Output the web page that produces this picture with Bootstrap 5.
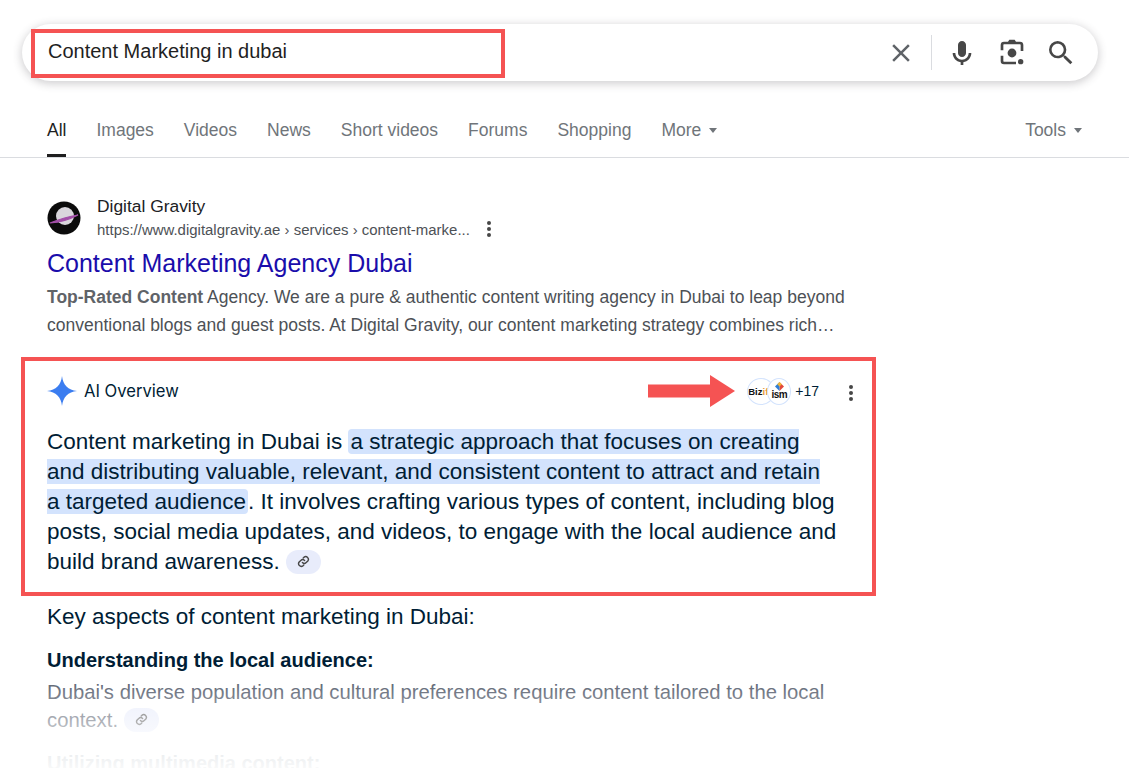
<!DOCTYPE html>
<html lang="en">
  <head>
    <meta charset="UTF-8" />
    <meta name="viewport" content="width=device-width, initial-scale=1.0" />
    <title>Content Marketing in dubai - Search</title>

    <link href="https://cdn.jsdelivr.net/npm/bootstrap@5.3.0/dist/css/bootstrap.min.css" rel="stylesheet" />
    <style>
      html, body {
        height: 768px;
        overflow: hidden;
      }
      body {
        position: relative;
        background-color: #fff;
        font-family: "Liberation Sans", Arial, sans-serif;
        color: #001d35;
      }
      .search-wrap {
        padding: 24px 31px 0 22px;
      }
      .search-pill {
        position: relative;
        height: 57px;
        border-radius: 29px;
        box-shadow: 0 2px 8px 1px rgba(64, 60, 67, 0.24);
        padding: 0 21px 0 26px;
      }
      .search-query {
        font-size: 20px;
        color: #1f1f1f;
        margin-top: -3px;
      }
      .search-actions svg {
        display: block;
      }
      .action-sep {
        width: 1px;
        height: 35px;
        background: #dadce0;
        margin: 0 14px 0 15px;
      }
      .icon-gap {
        margin-left: 17px;
      }
      .icon-gap-lens {
        margin-left: 18px;
      }
      .note-box {
        position: absolute;
        left: -17px;
        top: -7px;
        width: 474px;
        height: 49px;
        border: 4px solid #f55353;
        pointer-events: none;
      }
      .tabs-row {
        height: 77px;
        border-bottom: 1px solid #dadce0;
        padding: 0 47px;
      }
      .tab-list {
        gap: 30px;
      }
      .tab-item {
        font-size: 17.5px;
        color: #70757a;
        padding-top: 38px;
        height: 76px;
        line-height: 22px;
      }
      .tab-item.on {
        color: #1f1f1f;
        border-bottom: 3px solid #1f1f1f;
      }
      .tab-caret {
        display: inline-block;
        width: 0;
        height: 0;
        margin-left: 8px;
        vertical-align: 3px;
        border-left: 4.5px solid transparent;
        border-right: 4.5px solid transparent;
        border-top: 5px solid #70757a;
      }
      .result-block {
        padding: 36px 0 0 47px;
        width: 860px;
      }
      .logo-gap {
        margin-right: 16px;
      }
      .site-name {
        font-size: 17.4px;
        line-height: 24px;
        color: #202124;
      }
      .site-url {
        font-size: 14.96px;
        line-height: 24px;
        color: #4d5156;
      }
      .url-dots {
        margin-left: 17px;
      }
      .dots-v {
        width: 4px;
      }
      .dots-v i {
        display: block;
        width: 4px;
        height: 4px;
        border-radius: 50%;
        background: #474747;
        margin-bottom: 2px;
      }
      .result-title {
        font-size: 25px;
        line-height: 32px;
        color: #1a0dab;
        text-decoration: none;
        display: block;
        margin-top: 5px;
      }
      .result-snippet {
        font-size: 17.5px;
        line-height: 28px;
        color: #4d5156;
        margin: 4px 0 0;
        white-space: nowrap;
      }
      .result-snippet b {
        color: #5f6368;
      }
      .ai-box {
        position: relative;
        margin: 18px 0 0 21px;
        width: 855px;
        height: 239px;
        border: 4px solid #f55353;
        padding: 0 0 0 22px;
      }
      .ai-label {
        font-family: Inter, "Liberation Sans", sans-serif;
        font-size: 16.6px;
        color: #001d35;
        margin-left: -1px;
      }
      .ai-head {
        height: 60px;
        padding-right: 19px;
      }
      .ai-menu {
        margin-top: 5px;
      }
      .ai-arrow {
        position: absolute;
        left: 623px;
        top: 14px;
      }
      .src-dot {
        position: relative;
        width: 28px;
        height: 27px;
        border-radius: 50%;
        border: 1px solid #d3e3fd;
        background: #fff;
        font-size: 9.500px;
        font-weight: 700;
        line-height: 25px;
        color: #111;
        overflow: hidden;
        white-space: nowrap;
      }
      .src-dot + .src-dot {
        margin-left: -8px;
        width: 24px;
        height: 27px;
        text-align: center;
        line-height: 32px;
        font-size: 10px;
        letter-spacing: -0.5px;
      }
      .src-mark {
        position: absolute;
        left: 7px;
        top: 3px;
      }
      .src-more {
        font-size: 14px;
        color: #001d35;
        margin-left: 4px;
        margin-right: 30px;
      }
      .ai-text {
        font-size: 22.5px;
        line-height: 30px;
        margin: 6px 0 0;
        width: 790px;
        color: #001d35;
      }
      .ai-hl {
        background: #d3e3fd;
        border-radius: 4px;
        padding: 0 2px;
      }
      .link-chip {
        display: inline-flex;
        align-items: center;
        justify-content: center;
        width: 35px;
        height: 24px;
        border-radius: 12px;
        background: #e8ecfb;
        vertical-align: 1px;
      }
      .more-block {
        padding: 0 0 0 47px;
        width: 860px;
      }
      .key-line {
        font-size: 22.5px;
        line-height: 28px;
        margin: 7px 0 0;
      }
      .aspect-title {
        font-weight: 700;
        font-size: 20px;
        line-height: 24px;
        margin: 17px 0 0;
      }
      .aspect-text {
        font-size: 20.3px;
        line-height: 28px;
        margin: 6px 0 6px;
        color: #474f5f;
      }
      .page-fade {
        position: absolute;
        left: 0;
        right: 0;
        top: 670px;
        height: 98px;
        background: linear-gradient(to bottom, rgba(255,255,255,0) 0, rgba(255,255,255,0.55) 50px, rgba(255,255,255,0.93) 85px, rgba(255,255,255,0.97) 98px);
        pointer-events: none;
      }
    </style>
  </head>
  <body>
    <div class="search-wrap">
      <div class="search-pill d-flex align-items-center justify-content-between">
        <div class="search-query position-relative">
          Content Marketing in dubai
          <div class="note-box"></div>
        </div>
        <div class="search-actions d-flex align-items-center">
          <svg width="30" height="30" viewBox="0 0 24 24" fill="#5f6368"><path d="M19 6.41L17.59 5 12 10.59 6.41 5 5 6.41 10.59 12 5 17.59 6.41 19 12 13.41 17.59 19 19 17.59 13.41 12z"/></svg>
          <div class="action-sep"></div>
          <svg width="32" height="32" viewBox="0 0 24 24" fill="#474747"><path d="M12 15c1.66 0 3-1.34 3-3V6c0-1.66-1.34-3-3-3S9 4.34 9 6v6c0 1.66 1.34 3 3 3z"/><path d="M17 12c0 2.76-2.24 5-5 5s-5-2.24-5-5H5c0 3.53 2.61 6.43 6 6.92V21h2v-2.08c3.39-.49 6-3.39 6-6.92h-2z"/></svg>
          <svg class="icon-gap-lens" width="32" height="32" viewBox="0 0 24 24" fill="#474747"><path d="M9 3.500 10 2h4l1 1.500h3A2.500 2.500 0 0 1 20.500 6v4.500h-2V6a.5.5 0 0 0-.5-.5H6a.5.5 0 0 0-.5.5v4h-2V6A2.500 2.500 0 0 1 6 3.500z"/><path d="M3.500 14h2v4a.5.5 0 0 0 .5.5h9v2H6A2.500 2.500 0 0 1 3.500 18z"/><circle cx="12" cy="12" r="3.300"/><circle cx="18.500" cy="18.500" r="2"/></svg>
          <svg class="icon-gap" width="32" height="32" viewBox="0 0 24 24" fill="#474747"><path d="M15.5 14h-.79l-.28-.27A6.471 6.471 0 0 0 16 9.5 6.5 6.5 0 1 0 9.5 16c1.61 0 3.09-.59 4.23-1.57l.27.28v.79l5 4.99L20.49 19l-4.99-5zm-6 0C7.01 14 5 11.99 5 9.5S7.01 5 9.500 5 14 7.010 14 9.500 11.990 14 9.500 14z"/></svg>
        </div>
      </div>
    </div>

    <div class="tabs-row d-flex justify-content-between">
      <div class="tab-list d-flex">
        <div class="tab-item on">All</div>
        <div class="tab-item">Images</div>
        <div class="tab-item">Videos</div>
        <div class="tab-item">News</div>
        <div class="tab-item">Short videos</div>
        <div class="tab-item">Forums</div>
        <div class="tab-item">Shopping</div>
        <div class="tab-item">More<span class="tab-caret"></span></div>
      </div>
      <div class="tab-item">Tools<span class="tab-caret"></span></div>
    </div>

    <div class="result-block">
      <div class="d-flex align-items-center">
        <svg width="34" height="34" viewBox="0 0 34 34" class="logo-gap flex-shrink-0">
          <circle cx="17" cy="17" r="16.500" fill="#0b0b0b"/>
          <circle cx="18" cy="15" r="9" fill="#d9d6dc"/>
          <path d="M3 22 Q18 21 31 14 Q18 16 3 22z" fill="#a24fa8" stroke="#a24fa8" stroke-width="1.200"/>
        </svg>
        <div>
          <div class="site-name">Digital Gravity</div>
          <div class="site-url d-flex align-items-center">
            <span>https://www.digitalgravity.ae › services › content-marke...</span>
            <span class="dots-v url-dots"><i></i><i></i><i></i></span>
          </div>
        </div>
      </div>
      <a class="result-title" href="#">Content Marketing Agency Dubai</a>
      <p class="result-snippet"><b>Top-Rated Content</b> Agency. We are a pure &amp; authentic content writing agency in Dubai to leap beyond<br />conventional blogs and guest posts. At Digital Gravity, our content marketing strategy combines rich…</p>
    </div>

    <div class="ai-box">
      <div class="ai-head d-flex align-items-center justify-content-between">
        <div class="d-flex align-items-center">
          <svg width="30" height="30" viewBox="0 0 30 30" class="me-2">
            <path d="M15 0C16 9 21 14 30 15 21 16 16 21 15 30 14 21 9 16 0 15 9 14 14 9 15 0z" fill="#3b7df0"/>
          </svg>
          <span class="ai-label">AI Overview</span>
        </div>
        <div class="d-flex align-items-center">
          <div class="src-dot">Biz<span style="color:#e8973a">ify</span></div>
          <div class="src-dot">
            <svg class="src-mark" width="9" height="9" viewBox="0 0 8 8"><path d="M4 0 8 4 4 8z" fill="#e2483d"/><path d="M4 0 0 4 4 8z" fill="#2f7fd6"/><path d="M2 2 4 0 6 2 4 4z" fill="#f2b632"/></svg>
            ism
          </div>
          <span class="src-more">+17</span>
          <span class="dots-v ai-menu"><i></i><i></i><i></i></span>
        </div>
      </div>
      <svg class="ai-arrow" width="87" height="32" viewBox="0 0 87 32"><path d="M0 9.500H62V0L87 16 62 32V22.500H0z" fill="#f55353"/></svg>
      <p class="ai-text">Content marketing in Dubai is <span class="ai-hl">a strategic approach that focuses on creating and distributing valuable, relevant, and consistent content to attract and retain a targeted audience</span>. It involves crafting various types of content, including blog posts, social media updates, and videos, to engage with the local audience and build brand awareness. <span class="link-chip"><svg width="13" height="13" viewBox="0 0 24 24" fill="none" stroke="#474747" stroke-width="2.600" stroke-linecap="round"><path d="M10 14a5 5 0 0 0 7 0l3-3a5 5 0 0 0-7-7l-1.500 1.500"/><path d="M14 10a5 5 0 0 0-7 0l-3 3a5 5 0 0 0 7 7l1.500-1.500"/></svg></span></p>
    </div>

    <div class="more-block">
      <p class="key-line">Key aspects of content marketing in Dubai:</p>
      <p class="aspect-title">Understanding the local audience:</p>
      <p class="aspect-text">Dubai's diverse population and cultural preferences require content tailored to the local context. <span class="link-chip"><svg width="13" height="13" viewBox="0 0 24 24" fill="none" stroke="#474747" stroke-width="2.600" stroke-linecap="round"><path d="M10 14a5 5 0 0 0 7 0l3-3a5 5 0 0 0-7-7l-1.500 1.500"/><path d="M14 10a5 5 0 0 0-7 0l-3 3a5 5 0 0 0 7 7l1.500-1.500"/></svg></span></p>
      <p class="aspect-title">Utilizing multimedia content:</p>
    </div>
    <div class="page-fade"></div>

    <script src="https://cdn.jsdelivr.net/npm/bootstrap@5.3.0/dist/js/bootstrap.bundle.min.js"></script>
  </body>
</html>
